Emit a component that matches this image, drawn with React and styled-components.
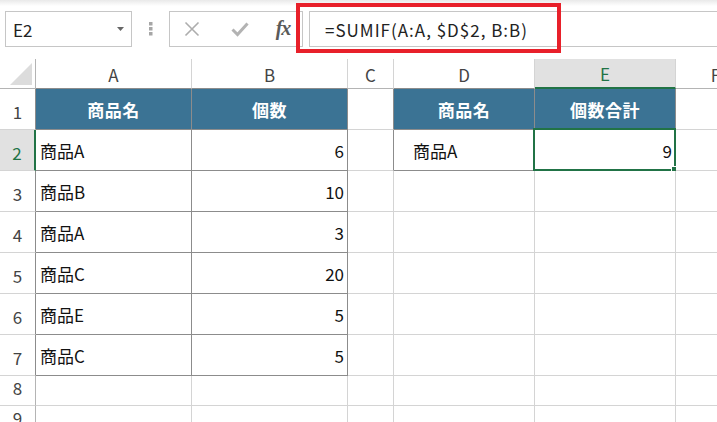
import React from "react";
import styled, { createGlobalStyle } from "styled-components";

const Global = createGlobalStyle`
  html, body { margin: 0; padding: 0; background: #fff; overflow: hidden; }
  body { font-family: "Noto Sans CJK JP", "Noto Sans", sans-serif; }
`;

const FONT = `"Noto Sans CJK JP", "Noto Sans", sans-serif`;
const GRID = "#d4d4d4";
const DARK = "#8c8c8c";
const EDGE = "#b4b4b4";
const GREEN = "#217346";
const HEAD_BG = "#3b7394";

const Page = styled.div`
  width: 717px;
  height: 422px;
  overflow: hidden;
  position: relative;
`;

const FormulaArea = styled.div`
  height: 59px;
  box-sizing: border-box;
  padding: 11px 0 0 5px;
  display: flex;
  align-items: flex-start;
  background: linear-gradient(#e9e9e9 0px, #ffffff 6px);
`;

const NameBox = styled.div`
  width: 127px;
  height: 36px;
  box-sizing: border-box;
  border: 1px solid #c6c6c6;
  background: #fff;
  display: flex;
  align-items: center;
  justify-content: space-between;
  padding: 0 7px 0 7px;
  font-family: ${FONT};
  font-size: 17px;
  color: #222;
`;

const Dots = styled.div`
  width: 37px;
  height: 36px;
  display: flex;
  align-items: center;
  justify-content: center;
`;

const ButtonBox = styled.div`
  width: 134px;
  height: 36px;
  box-sizing: border-box;
  border: 1px solid #c6c6c6;
  display: flex;
  align-items: center;
  padding-left: 13px;
`;

const IconSlot = styled.div`
  width: ${(p) => p.$w}px;
  height: 34px;
  display: flex;
  align-items: center;
  justify-content: center;
`;

const Fx = styled.span`
  font-family: "Liberation Serif", "DejaVu Serif", serif;
  font-style: italic;
  font-weight: bold;
  font-size: 20px;
  color: #5a5a5a;
  letter-spacing: -1px;
  margin-top: -2px;
`;

const FormulaInput = styled.div`
  margin-left: 6px;
  flex: 1;
  height: 36px;
  box-sizing: border-box;
  border: 1px solid #c6c6c6;
  border-right: none;
  display: flex;
  align-items: center;
  padding-left: 15px;
  font-family: ${FONT};
  font-size: 17px;
  letter-spacing: 1px;
  color: #222;
  white-space: nowrap;
`;

const RedFrame = styled.div`
  position: absolute;
  left: 296px;
  top: 3px;
  width: 265px;
  height: 50px;
  box-sizing: border-box;
  border: 4px solid #e8202a;
  pointer-events: none;
`;

const Sheet = styled.div`
  display: grid;
  grid-template-columns: 36px 156px 156px 46px 141px 141px 80px;
  grid-template-rows: 30px repeat(7, 41px) 30px 30px;
`;

const Cell = styled.div`
  position: relative;
  box-sizing: border-box;
  border-right: ${(p) => p.$rw || 1}px solid ${(p) => p.$r || GRID};
  border-bottom: ${(p) => p.$bw || 1}px solid ${(p) => p.$b || GRID};
  background: ${(p) => p.$bg || "#fff"};
  display: flex;
  align-items: center;
  font-family: ${FONT};
  font-size: 17px;
  color: #111;
  white-space: nowrap;
  overflow: visible;
`;

const ColHead = styled(Cell)`
  justify-content: center;
  font-size: 17px;
  color: ${(p) => (p.$active ? GREEN : "#444")};
  padding-top: 1px;
`;

const RowHead = styled(Cell)`
  justify-content: center;
  align-items: flex-end;
  padding-bottom: 5px;
  font-size: 17px;
  color: ${(p) => (p.$active ? GREEN : "#444")};
`;

const Corner = styled(Cell)`
  align-items: flex-end;
  justify-content: flex-end;
  padding: 0 3px 3px 0;
`;

const HeaderCell = styled(Cell)`
  justify-content: center;
  color: #fff;
  font-weight: bold;
  letter-spacing: 0.5px;
`;

const TextCell = styled(Cell)`
  justify-content: flex-start;
  padding-left: ${(p) => (p.$indent ? 19 : 4)}px;
`;

const NumCell = styled(Cell)`
  justify-content: flex-end;
  padding-right: 3px;
`;

const Selection = styled.div`
  position: absolute;
  left: -2px;
  top: -2px;
  width: 143px;
  height: 43px;
  box-sizing: border-box;
  border: 2px solid ${GREEN};
  pointer-events: none;
`;

const Handle = styled.div`
  position: absolute;
  right: -4px;
  bottom: -4px;
  width: 6px;
  height: 6px;
  box-sizing: border-box;
  background: ${GREEN};
  outline: 1px solid #fff;
`;

const COLS = ["A", "B", "C", "D", "E", "F"];
const ROWS = [1, 2, 3, 4, 5, 6, 7, 8, 9];

const DATA = {
  A1: { t: "商品名", k: "head" },
  B1: { t: "個数", k: "head" },
  D1: { t: "商品名", k: "head" },
  E1: { t: "個数合計", k: "head" },
  A2: { t: "商品A", k: "text" },
  B2: { t: "6", k: "num" },
  A3: { t: "商品B", k: "text" },
  B3: { t: "10", k: "num" },
  A4: { t: "商品A", k: "text" },
  B4: { t: "3", k: "num" },
  A5: { t: "商品C", k: "text" },
  B5: { t: "20", k: "num" },
  A6: { t: "商品E", k: "text" },
  B6: { t: "5", k: "num" },
  A7: { t: "商品C", k: "text" },
  B7: { t: "5", k: "num" },
  D2: { t: "商品A", k: "text", indent: true },
  E2: { t: "9", k: "num" },
};

const inTable = (c, r) => {
  const ci = COLS.indexOf(c);
  if (ci < 0) return false;
  if (ci <= 1 && r >= 1 && r <= 7) return true;
  if ((ci === 3 || ci === 4) && r >= 1 && r <= 2) return true;
  return false;
};

const nextCol = (c) => COLS[COLS.indexOf(c) + 1];

function NameArrow() {
  return (
    <svg width="7" height="4" viewBox="0 0 7 4">
      <path d="M0 0 H7 L3.5 4 Z" fill="#666" />
    </svg>
  );
}

function VDots() {
  return (
    <svg width="5" height="14" viewBox="0 0 5 14">
      <rect x="1" y="0" width="3.5" height="3.5" fill="#a6a6a6" />
      <rect x="1" y="5" width="3.5" height="3.5" fill="#a6a6a6" />
      <rect x="1" y="10" width="3.5" height="3.5" fill="#a6a6a6" />
    </svg>
  );
}

function CrossIcon() {
  return (
    <svg width="16" height="16" viewBox="0 0 16 16">
      <path d="M1.5 1.5 L14.5 14.5 M14.5 1.5 L1.5 14.5" stroke="#adadad" strokeWidth="1.6" fill="none" />
    </svg>
  );
}

function CheckIcon() {
  return (
    <svg width="18" height="15" viewBox="0 0 18 15">
      <path d="M1.5 7.5 L6.5 12.5 L16.5 1.5" stroke="#b3b3b3" strokeWidth="3" fill="none" />
    </svg>
  );
}

function renderCell(c, r) {
  const key = c + r;
  const d = DATA[key];
  const tbl = inTable(c, r);
  const right = tbl || inTable(nextCol(c), r) ? DARK : GRID;
  const bottom = tbl || inTable(c, r + 1) ? DARK : GRID;
  const common = { key, $r: right, $b: bottom };
  if (!d) return <Cell {...common} />;
  if (d.k === "head")
    return (
      <HeaderCell {...common} $bg={HEAD_BG}>
        {d.t}
      </HeaderCell>
    );
  if (d.k === "num")
    return (
      <NumCell {...common}>
        {d.t}
        {key === "E2" && (
          <Selection>
            <Handle />
          </Selection>
        )}
      </NumCell>
    );
  return (
    <TextCell {...common} $indent={d.indent}>
      {d.t}
    </TextCell>
  );
}

export default function App() {
  return (
    <Page>
      <Global />
      <FormulaArea>
        <NameBox>
          <span>E2</span>
          <NameArrow />
        </NameBox>
        <Dots>
          <VDots />
        </Dots>
        <ButtonBox>
          <IconSlot $w={18}>
            <CrossIcon />
          </IconSlot>
          <IconSlot $w={28} />
          <IconSlot $w={22}>
            <CheckIcon />
          </IconSlot>
          <IconSlot $w={22} />
          <IconSlot $w={20}>
            <Fx>fx</Fx>
          </IconSlot>
        </ButtonBox>
        <FormulaInput>=SUMIF(A:A, $D$2, B:B)</FormulaInput>
      </FormulaArea>
      <RedFrame />
      <Sheet>
        <Corner $r={EDGE} $b={EDGE}>
          <svg width="22" height="22" viewBox="0 0 22 22">
            <path d="M22 0 V22 H0 Z" fill="#dcdcdc" />
          </svg>
        </Corner>
        {COLS.map((c) => (
          <ColHead
            key={"h" + c}
            $active={c === "E"}
            $bg={c === "E" ? "#e1e1e1" : "#fff"}
            $r={GRID}
            $b={c === "E" ? GREEN : inTable(c, 1) ? DARK : EDGE}
            $bw={c === "E" ? 2 : 1}
          >
            {c}
          </ColHead>
        ))}
        {ROWS.map((r) => (
          <React.Fragment key={"r" + r}>
            <RowHead
              $active={r === 2}
              $bg={r === 2 ? "#e1e1e1" : "#fff"}
              $r={r === 2 ? GREEN : inTable("A", r) ? DARK : EDGE}
              $rw={r === 2 ? 2 : 1}
              $b={GRID}
            >
              {r}
            </RowHead>
            {COLS.map((c) => renderCell(c, r))}
          </React.Fragment>
        ))}
      </Sheet>
    </Page>
  );
}
